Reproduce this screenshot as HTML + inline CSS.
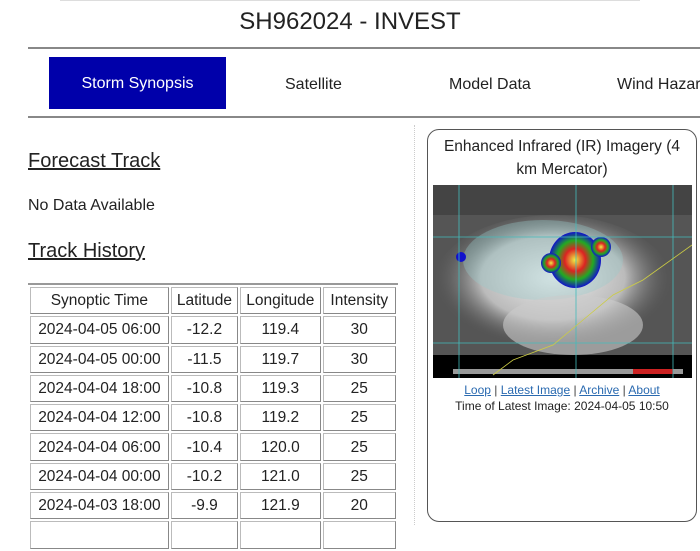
<!DOCTYPE html>
<html><head><meta charset="utf-8"><style>
*{margin:0;padding:0;box-sizing:border-box}
body{width:700px;height:525px;overflow:hidden;background:#fff;font-family:"Liberation Sans",sans-serif;color:#222;position:relative}
.a{position:absolute;white-space:nowrap}
.hr{position:absolute;height:2px;background:#888}
table{position:absolute;left:28px;top:283px;width:370px;table-layout:fixed;border-collapse:separate;border-spacing:2px 2px;border-top:2px solid #999}
td{border:1px solid #888;border-top-color:#bbb;border-left-color:#bbb;height:27.3px;font-size:15.5px;text-align:center;padding:1px 0 0;color:#222;white-space:nowrap;overflow:hidden}
</style></head><body>
<div class="hr" style="left:60px;top:0;width:580px;height:1px;background:#ddd"></div>
<div class="a" style="left:0;width:700px;top:8px;text-align:center;font-size:24px;color:#222">SH962024 - INVEST</div>
<div class="hr" style="left:28px;top:47px;width:672px"></div>
<div class="a" style="left:49px;top:57px;width:177px;height:52px;background:#0000aa;color:#fff;font-size:16px;text-align:center;line-height:54px">Storm Synopsis</div>
<div class="a" style="left:285px;top:76px;font-size:16px">Satellite</div>
<div class="a" style="left:449px;top:76px;font-size:16px">Model Data</div>
<div class="a" style="left:617px;top:76px;font-size:16px">Wind Hazard</div>
<div class="hr" style="left:28px;top:116px;width:672px"></div>
<div class="a" style="left:414px;top:125px;width:1px;height:400px;border-left:1px dotted #ccc"></div>
<div class="a" style="left:28px;top:150px;font-size:20px;text-decoration:underline">Forecast Track</div>
<div class="a" style="left:28px;top:197px;font-size:16px">No Data Available</div>
<div class="a" style="left:28px;top:240px;font-size:20px;text-decoration:underline">Track History</div>
<table>
<colgroup><col style="width:138px"><col style="width:67px"><col style="width:80px"><col style="width:73px"></colgroup>
<tr><td>Synoptic Time</td><td>Latitude</td><td>Longitude</td><td>Intensity</td></tr>
<tr><td>2024-04-05 06:00</td><td>-12.2</td><td>119.4</td><td>30</td></tr>
<tr><td>2024-04-05 00:00</td><td>-11.5</td><td>119.7</td><td>30</td></tr>
<tr><td>2024-04-04 18:00</td><td>-10.8</td><td>119.3</td><td>25</td></tr>
<tr><td>2024-04-04 12:00</td><td>-10.8</td><td>119.2</td><td>25</td></tr>
<tr><td>2024-04-04 06:00</td><td>-10.4</td><td>120.0</td><td>25</td></tr>
<tr><td>2024-04-04 00:00</td><td>-10.2</td><td>121.0</td><td>25</td></tr>
<tr><td>2024-04-03 18:00</td><td>-9.9</td><td>121.9</td><td>20</td></tr>
<tr><td>&nbsp;</td><td></td><td></td><td></td></tr>
</table>
<div class="a" style="left:427px;top:129px;width:270px;height:393px;border:1.5px solid #555;border-radius:12px"></div>
<div class="a" style="left:427px;top:135px;width:270px;text-align:center;font-size:15.5px;line-height:23px">Enhanced Infrared (IR) Imagery (4<br>km Mercator)</div>
<svg class="a" style="left:433px;top:185px" width="259" height="193" viewBox="0 0 259 193">
<defs>
<radialGradient id="sw" cx="0.5" cy="0.45" r="0.5"><stop offset="0" stop-color="#eee"/><stop offset="0.6" stop-color="#bbb"/><stop offset="1" stop-color="#555" stop-opacity="0"/></radialGradient>
<radialGradient id="c" cx="0.5" cy="0.5" r="0.5"><stop offset="0" stop-color="#ee4"/><stop offset="0.4" stop-color="#d22"/><stop offset="0.7" stop-color="#2a2"/><stop offset="1" stop-color="#11c"/></radialGradient>
</defs>
<rect width="259" height="193" fill="#555"/>
<rect y="0" width="259" height="30" fill="#444"/>
<ellipse cx="120" cy="100" rx="120" ry="70" fill="url(#sw)"/>
<ellipse cx="110" cy="75" rx="80" ry="40" fill="#9cc" opacity="0.35"/>
<ellipse cx="140" cy="140" rx="70" ry="30" fill="#ccc" opacity="0.6"/>
<ellipse cx="142" cy="75" rx="26" ry="28" fill="url(#c)"/>
<ellipse cx="118" cy="78" rx="10" ry="10" fill="url(#c)"/>
<ellipse cx="168" cy="62" rx="10" ry="10" fill="url(#c)"/>
<ellipse cx="28" cy="72" rx="5" ry="5" fill="#11c"/>
<rect y="170" width="259" height="23" fill="#000"/>
<rect x="20" y="184" width="230" height="5" fill="#999"/>
<rect x="200" y="184" width="40" height="5" fill="#c22"/>
<path d="M0 52H259M0 158H259M26 0V193M143 0V193M240 0V193" stroke="#4bb" stroke-width="0.8"/>
<path d="M60 190L80 175L120 160L150 135L180 110L210 95L259 60" stroke="#cc4" stroke-width="0.8" fill="none"/>
</svg>
<div class="a" style="left:427px;top:383px;width:270px;text-align:center;font-size:12px;color:#444"><span style="color:#2a6ab0;text-decoration:underline">Loop</span> | <span style="color:#2a6ab0;text-decoration:underline">Latest Image</span> | <span style="color:#2a6ab0;text-decoration:underline">Archive</span> | <span style="color:#2a6ab0;text-decoration:underline">About</span></div>
<div class="a" style="left:427px;top:399px;width:270px;text-align:center;font-size:12px;color:#222">Time of Latest Image: 2024-04-05 10:50</div>
</body></html>
